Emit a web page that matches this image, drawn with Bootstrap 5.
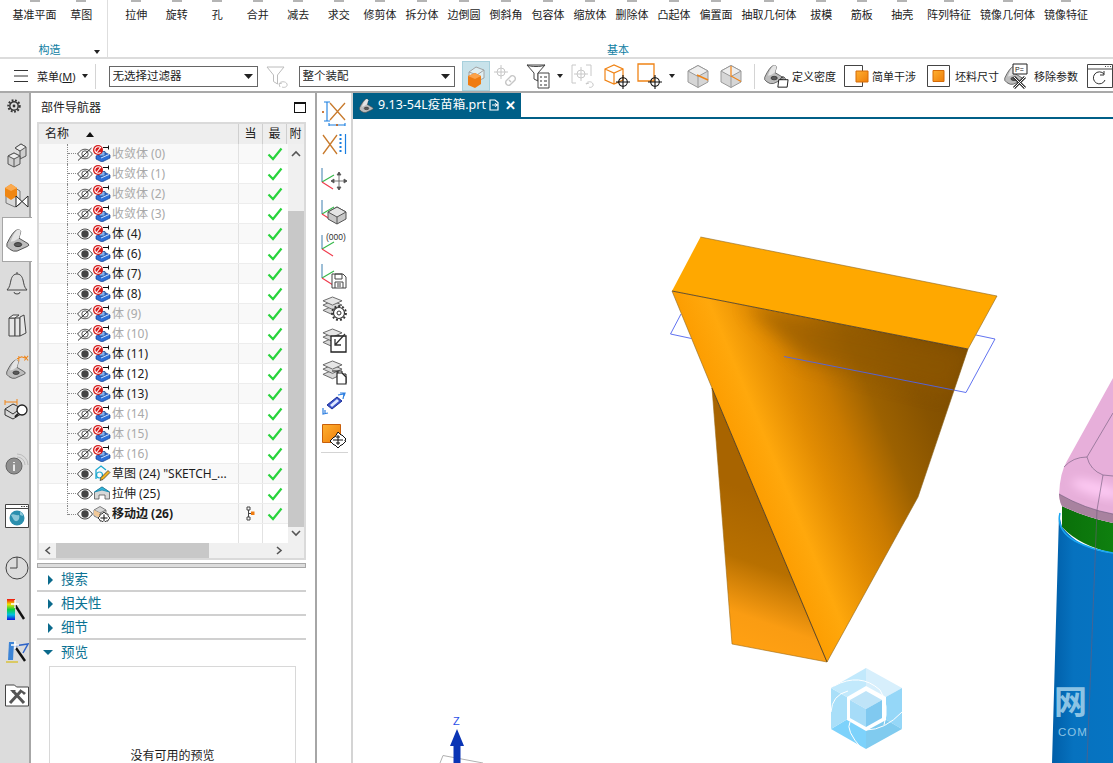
<!DOCTYPE html>
<html lang="zh-CN">
<head>
    <meta charset="UTF-8">
    <meta name="viewport" content="width=device-width, initial-scale=1.0">
    <title>NX 部件导航器</title>
    <link href="https://cdn.jsdelivr.net/npm/bootstrap@5.3.2/dist/css/bootstrap.min.css" rel="stylesheet">
    <style>
        body { font-family: "Noto Sans", "Noto Sans CJK SC", sans-serif; font-size: 11px; color: #1c1c1c; background: #fff; width: 1113px; height: 763px; }
        svg { display: block; flex-shrink: 0; }

        /* ribbon */
        .ribbon { height: 59px; border-bottom: 2px solid #dcdcdc; flex-shrink: 0; }
        .rb-group { flex-shrink: 0; border-right: 1px solid #dedede; height: 57px; position: relative; }
        .rb-left { width: 108px; }
        .rb-main { width: 1020px; border-right: 0; }
        .rb-items { height: 42px; padding-left: 8px; flex-wrap: nowrap; }
        .rb-item { padding: 0 4.5px; min-width: 40.5px; text-align: center; white-space: nowrap; line-height: 15px; flex-shrink: 0; }
        .rb-item::before { content: ""; display: block; width: 10px; height: 2px; margin: 0 auto 5px; background: #b4b4b4; }
        .rb-title { color: #0f7ea3; text-align: center; line-height: 15px; }
        .rb-left .rb-title { padding-right: 8px; }
        .rb-more { position: absolute; right: 7px; bottom: 3px; }
        .tri-d { width: 0; height: 0; border-left: 3.5px solid transparent; border-right: 3.5px solid transparent; border-top: 4px solid #222; flex-shrink: 0; }

        /* toolbar */
        .toolbar { height: 34px; padding-top: 2px; border-bottom: 2px solid #a9a9a9; flex-shrink: 0; white-space: nowrap; }
        .tb-sep { width: 1px; height: 25px; background: #d4d4d4; }
        .tb-select { width: 149px; height: 21px; padding: 0 14px 0 3px; font-size: 11.5px; border: 1px solid #666; border-radius: 0; color: #1c1c1c; background-position: right 4px center; background-size: 9px 5px; background-image: url("data:image/svg+xml,%3Csvg xmlns='http://www.w3.org/2000/svg' viewBox='0 0 9 5'%3E%3Cpath d='M0 0h9L4.5 5z' fill='%23222'/%3E%3C/svg%3E"); flex-shrink: 0; }
        .tb-wide { width: 156px; }
        .tb-on { width: 31px; height: 30px; background: #c8e2ea; border: 1px solid #a8d0dc; }
        .tb-label { font-size: 11px; line-height: 1; }
        .gl-2 { margin-left: 2px; } .gl-3 { margin-left: 3px; } .gl-4 { margin-left: 4px; } .gl-5 { margin-left: 5px; }
        .gl-6 { margin-left: 6px; } .gl-7 { margin-left: 7px; } .gl-8 { margin-left: 8px; } .gl-9 { margin-left: 9px; }
        .gl-11 { margin-left: 11px; } .gl-13 { margin-left: 13px; } .gl-14 { margin-left: 14px; }

        /* left rail */
        .rail { width: 31px; background: #dcdcdc; border-right: 2px solid #a6a6a6; flex-shrink: 0; }
        .rail-slot { height: 42px; width: 29px; margin-left: 2px; flex-shrink: 0; }
        .rail-gear { height: 26px; padding-right: 6px; }
        .rail-40 { height: 40px; }
        .rail-first { margin-top: 16px; }
        .rail-on { height: 45px; width: 30px; margin-top: 2px; background: #fff; border: 1px solid #a6a6a6; border-right: 0; margin-right: -2px; position: relative; z-index: 1; }
        .rail-g13 { margin-top: 13px; }
        .rail-g10 { margin-top: 10px; }

        /* navigator */
        .navi { width: 286px; border-right: 2px solid #a6a6a6; flex-shrink: 0; padding-left: 6px; }
        .navi-head { height: 29px; padding: 0 9px 0 4px; font-size: 12px; }
        .max-box { width: 12px; height: 11px; border: 1px solid #111; border-top-width: 2px; }
        .tree-box { width: 269px; height: 438px; border: 2px solid #dadada; border-bottom-width: 2px; }
        .tree-head { height: 20px; background: #eeeeee; font-size: 12px; line-height: 20px; }
        .c-name { width: 199px; flex-shrink: 0; }
        .c-cur { width: 24px; flex-shrink: 0; border-left: 1px solid #e2e2e2; }
        .c-new { width: 24px; flex-shrink: 0; border-left: 1px solid #e2e2e2; }
        .tree-head .c-name { padding-left: 6px; }
        .tree-head .c-cur, .tree-head .c-new, .tree-head .c-att { border-left: 1px solid #cfcfcf; text-align: center; height: 20px; }
        .c-att { flex-grow: 1; overflow: hidden; }
        .sort-up { width: 0; height: 0; border-left: 4.5px solid transparent; border-right: 4.5px solid transparent; border-bottom: 5px solid #111; margin-left: 17px; }
        .tree-row { height: 20px; font-size: 12px; border-bottom: 1px solid #ededed; white-space: nowrap; }
        .tree-row:nth-child(odd) { background: #f9f9f9; }
        .tree-empty { height: 19px; }
        .is-off { color: #a9a9a9; }
        .is-cur { font-weight: 700; }
        .tline { width: 10px; height: 20px; margin-left: 28px; border-left: 1px dotted #8a8a8a; position: relative; flex-shrink: 0; }
        .tline::after { content: ""; position: absolute; left: 0; top: 9px; width: 10px; border-top: 1px dotted #8a8a8a; }
        .tline-end { height: 10px; align-self: flex-start; }
        .tree-name { margin-left: 1px; }
        .vbar { width: 16px; background: #f0f0f0; position: relative; }
        .vthumb { position: absolute; left: 0; right: 0; top: 67px; height: 316px; background: #c8c8c8; }
        .vup { position: absolute; left: 3px; top: 6px; }
        .vdn { position: absolute; left: 3px; bottom: 6px; }
        .hbar { height: 15px; background: #f0f0f0; position: relative; }
        .hthumb { position: absolute; left: 17px; width: 153px; top: 0; bottom: 0; background: #c8c8c8; }
        .hl { position: absolute; left: 5px; top: 3px; }
        .hr { position: absolute; right: 21px; top: 3px; }
        .sash { width: 269px; height: 5px; margin-top: 3px; background: #dcdcdc; border: 1px solid #a8a8a8; }
        .sect { width: 269px; height: 24px; border-bottom: 2px solid #d0d0d0; color: #0b7293; font-size: 13.5px; padding-top: 1px; }
        .sect-last { border-bottom: 0; height: 23px; }
        .tri-r { width: 0; height: 0; border-top: 5px solid transparent; border-bottom: 5px solid transparent; border-left: 5px solid #0b6a8c; margin: 0 8px 0 11px; }
        .tri-o { width: 0; height: 0; border-left: 5px solid transparent; border-right: 5px solid transparent; border-bottom: 0; border-top: 5px solid #0b6a8c; margin: 0 8px 0 6px; }
        .preview { width: 247px; height: 110px; margin: 3px 0 0 12px; border: 1px solid #d8d8d8; padding-top: 80px; text-align: center; font-size: 12px; }

        /* vertical tools */
        .vtools { width: 36px; border-right: 2px solid #d4d4d4; flex-shrink: 0; padding-top: 4px; }
        .vt-slot { height: 32px; flex-shrink: 0; }
        .vt-gap { margin-top: 3px; }
        .vt-line { width: 27px; height: 1px; background: #d4d4d4; margin-top: 0; }

        /* graphics window */
        .view { min-width: 0; }
        .tabstrip { height: 26px; border-bottom: 2px solid #005f87; flex-shrink: 0; }
        .doc-tab { width: 168px; height: 24px; background: #005f87; color: #fff; font-size: 12.5px; padding-left: 5px; }
        .doc-x { font-size: 13px; font-weight: 700; line-height: 1; }
    </style>
</head>
<body class="d-flex flex-column overflow-hidden">
    <svg width="0" height="0" class="position-absolute">
        <defs>
            <linearGradient id="gOrange" x1="0" y1="0" x2="1" y2="1"><stop offset="0" stop-color="#ffb030"/><stop offset="1" stop-color="#ee7d0a"/></linearGradient>
            <linearGradient id="gRainbow" x1="0" y1="0" x2="0" y2="1"><stop offset="0" stop-color="#f01010"/><stop offset=".25" stop-color="#f0e000"/><stop offset=".5" stop-color="#10d040"/><stop offset=".75" stop-color="#00c0e0"/><stop offset="1" stop-color="#1010e0"/></linearGradient>
            <symbol id="eye" viewBox="0 0 16 12"><path d="M.5 6C3 2.400 5.400 1 8 1s5 1.400 7.500 5C13 9.600 10.600 11 8 11S3 9.600 .5 6z" fill="#fff" stroke="#444"/><circle cx="8" cy="6" r="3.700" fill="#444"/></symbol>
            <symbol id="eye-off" viewBox="0 0 16 14"><path d="M.7 7C3 3.600 5.400 2.200 8 2.200S13 3.600 15.300 7C13 10.400 10.600 11.800 8 11.800S3 10.400 .7 7z" fill="#fff" stroke="#555"/><circle cx="8" cy="7" r="3.200" fill="none" stroke="#555"/><path d="M1 13.500 14.500 1" stroke="#333" stroke-width="1"/></symbol>
            <symbol id="body-node" viewBox="0 0 18 17"><path d="M3 11l8-4 6 3v3l-8 4-6-3z" fill="#2f6fd6" stroke="#163f8c" stroke-width=".7"/><path d="M6 6.500h6v4.500H6z" fill="#7fb0ee" stroke="#163f8c" stroke-width=".7"/><path d="M8 13l8-3.500" stroke="#cfe3fa"/><circle cx="5" cy="5" r="5" fill="#d61a1a"/><path d="M7.600 2.800a3.300 3.300 0 1 0 0 4.400M3 8l5-6" fill="none" stroke="#fff" stroke-width="1.100"/><path d="M10 2.500h6M15.500 .5v4" stroke="#111" stroke-width="1"/></symbol>
            <symbol id="sketch-node" viewBox="0 0 18 17"><path d="M3 14V5l5-4 5 4" fill="none" stroke="#19a7cf" stroke-width="1.300"/><circle cx="6.500" cy="10" r="3" fill="none" stroke="#19a7cf" stroke-width="1.200"/><path d="M7 15.500l1-3 7-7 2 2-7 7z" fill="#f3b21f" stroke="#333" stroke-width=".7"/></symbol>
            <symbol id="extrude-node" viewBox="0 0 18 17"><path d="M1.500 7 9 2l7.500 5v7H12v-4H6v4H1.500z" fill="#d8d8d8" stroke="#555" stroke-width=".8"/><path d="M1.500 7 9 2l7.500 5L9 5z" fill="#35b7dc" stroke="#1787ad" stroke-width=".8"/></symbol>
            <symbol id="move-node" viewBox="0 0 18 17"><path d="M1 5l6-3.500L13 5v6l-6 3-6-3z" fill="#d6d6d6" stroke="#666" stroke-width=".8"/><path d="M1 5l6 3 6-3" fill="none" stroke="#666" stroke-width=".8"/><path d="M1 5l6 3v5l-6-3z" fill="#f2c998"/><path d="M11 7l2 2h2v2l2 2-2 2v1h-2l-2 2-2-2H7v-1l-2-2 2-2V9h2z" fill="#fff" stroke="#111" stroke-width=".8"/><path d="M11 9.500v7M7.500 13h7" stroke="#111" stroke-width="1"/></symbol>
            <symbol id="check" viewBox="0 0 16 14"><path d="M1.500 7.500 6 12 14.500 1.500" fill="none" stroke="#28d33c" stroke-width="2.200"/></symbol>
            <symbol id="chev-up" viewBox="0 0 10 7"><path d="M1 6l4-4 4 4" fill="none" stroke="#555" stroke-width="1.600"/></symbol>
            <symbol id="chev-dn" viewBox="0 0 10 7"><path d="M1 1l4 4 4-4" fill="none" stroke="#555" stroke-width="1.600"/></symbol>
            <symbol id="target" viewBox="0 0 14 14"><circle cx="7" cy="7" r="4.300" fill="none" stroke="#111" stroke-width="1.100"/><path d="M7 0v14M0 7h14" stroke="#111" stroke-width="1.100"/></symbol>
            <symbol id="axes" viewBox="0 0 26 28"><path d="M1 1v14" stroke="#3d7fae" stroke-width="1"/><path d="M1 15 13 8" stroke="#35b84a" stroke-width="1.100"/><path d="M1 15l11 7" stroke="#ef3a4c" stroke-width="1.100"/></symbol>
            <symbol id="layers" viewBox="0 0 22 24"><g fill="#d8d8d8" stroke="#666" stroke-width="1"><path d="M1 15l10-4.500L21 15l-10 4.500z"/><path d="M1 9.500l10-4.500 10 4.500-10 4.500z"/><path d="M1 5l10-4 10 4-10 4.500z" fill="#e6e6e6"/></g></symbol>
            <symbol id="part" viewBox="0 0 28 26"><path d="M2 17Q8 4 13 2q3-1 4 2l-2 7 10 6q2 2-1 3l-11 5q-4 1-8-2l-3-3z" fill="#bdbdbd" stroke="#4a4a4a"/><path d="M13 2q3-1 4 2l-2 7-5 3-4 1q3-9 7-13z" fill="#e4e4e4"/><ellipse cx="14" cy="18" rx="4" ry="2.200" fill="#5a5a5a" stroke="#333"/></symbol>
            <symbol id="cube-g" viewBox="0 0 24 24"><path d="M12 1.500 22 7v11l-10 5.500L2 18V7z" fill="#d6d6d6" stroke="#999"/><path d="M2 7l10 5.500L22 7 12 1.500z" fill="#eeeeee" stroke="#999"/><path d="M12 12.500v11" stroke="#999"/></symbol>
        </defs>
    </svg>

    <!-- Ribbon -->
    <div class="ribbon d-flex">
        <div class="rb-group rb-left d-flex flex-column">
            <div class="rb-items d-flex">
                <div class="rb-item">基准平面</div>
                <div class="rb-item">草图</div>
            </div>
            <div class="rb-title">构造</div>
            <span class="tri-d rb-more"></span>
        </div>
        <div class="rb-group rb-main d-flex flex-column">
            <div class="rb-items d-flex" id="ribbonItems"></div>
            <div class="rb-title">基本</div>
        </div>
    </div>

    <!-- Selection bar -->
    <div class="toolbar d-flex align-items-center">
        <svg class="gl-14" width="14" height="12" viewBox="0 0 14 12"><path d="M0 .5h14M0 6h14M0 11.500h14" stroke="#333"/></svg>
        <span class="gl-9 tb-label">菜单(<u>M</u>)</span>
        <span class="tri-d gl-6"></span>
        <span class="tb-sep gl-7"></span>
        <select class="form-select tb-select gl-13"><option>无选择过滤器</option></select>
        <svg class="gl-8" width="24" height="25" viewBox="0 0 24 25"><path d="M1 3h17l-6.500 8v9l-4-2.500V11z" fill="#fff" stroke="#bcbcbc"/><path d="M13 20c1-3 7-3 8 0s-3 4-5 3M13 20l3-1M13 20l1 3" fill="none" stroke="#c4c4c4"/></svg>
        <select class="form-select tb-select tb-wide gl-9"><option>整个装配</option></select>
        <div class="tb-on gl-7 d-flex align-items-center justify-content-center">
            <svg width="20" height="25" viewBox="0 0 20 25"><path d="M3 8l7-5 8 3v8l-8 4-7-3z" fill="#dfeef2" stroke="#a2a2a2"/><path d="M3 8l8 3 7-5M11 11v7" fill="none" stroke="#a2a2a2"/><path d="M2 12l7-3 6 3v8l-6 4-7-3z" fill="#ef7c12"/><path d="M2 12l7 3 6-3-6-3z" fill="#fba24a"/></svg>
        </div>
        <svg class="gl-3" width="24" height="24" viewBox="0 0 24 24"><g fill="none" stroke="#c6c6c6"><circle cx="8" cy="8" r="4"/><path d="M8 1v14M1 8h14"/><path d="M13 17l5-5a3 3 0 0 1 4 4l-5 5a3 3 0 0 1-4-4zM16 16l2 2" stroke-width="1.400"/></g></svg>
        <svg class="gl-9" width="24" height="26" viewBox="0 0 24 26"><path d="M1 2h18l-7 8v8l-4-2v-6z" fill="#fff" stroke="#444"/><path d="M1 2c3 2 15 2 18 0" fill="none" stroke="#444"/><path d="M12 10h11v15H12z" fill="#fff" stroke="#444"/><path d="M14 14h2M14 18h2M14 22h2M18 14h3M18 18h3M18 22h3" stroke="#333"/></svg>
        <span class="tri-d gl-7"></span>
        <svg class="gl-8" width="24" height="25" viewBox="0 0 24 25"><g fill="none" stroke="#c8c8c8"><path d="M5 1H1v18h4M15 1h5v11"/><circle cx="10" cy="10" r="4"/><path d="M10 3v14M3 10h14"/><path d="M15 20c1-3 6-3 7 0s-3 4-4 3M15 20l3-1"/></g></svg>
        <svg class="gl-9" width="26" height="26" viewBox="0 0 26 26"><path d="M1 6l9-4 9 4v11l-9 4-9-4zM1 6l9 4 9-4M10 10v11" fill="#fff" stroke="#f08416" stroke-width="1.200"/><use href="#target" x="12" y="12" width="14" height="14"/></svg>
        <svg class="gl-7" width="25" height="26" viewBox="0 0 25 26"><path d="M1 1h16v17H1z" fill="#fff" stroke="#f08416" stroke-width="1.300"/><use href="#target" x="11" y="12" width="14" height="14"/></svg>
        <span class="tri-d gl-7"></span>
        <svg class="gl-11" width="24" height="24" viewBox="0 0 24 24"><use href="#cube-g" width="24" height="24"/><path d="M11 11l11 5" stroke="#f08416" stroke-width="1.400"/></svg>
        <svg class="gl-9" width="24" height="24" viewBox="0 0 24 24"><use href="#cube-g" width="24" height="24"/><path d="M12 2v10l10 5.500" fill="none" stroke="#f08416" stroke-width="1.200"/></svg>
        <span class="tb-sep gl-11"></span>
        <svg class="gl-8" width="26" height="26" viewBox="0 0 28 26"><use href="#part" width="24" height="22"/><path d="M17 17h10l-1 8H16z" fill="#fff" stroke="#111"/><path d="M19 17c0-4 5-4 5 0" fill="none" stroke="#111"/></svg>
        <span class="gl-3 tb-label">定义密度</span>
        <svg class="gl-8" width="26" height="22" viewBox="0 0 26 22"><path d="M.5.5h18v21H.5z" fill="none" stroke="#444"/><path d="M12 6h12v11H12z" fill="url(#gOrange)" stroke="#d46a08"/></svg>
        <span class="gl-2 tb-label">简单干涉</span>
        <svg class="gl-11" width="23" height="22" viewBox="0 0 23 22"><path d="M.5.5h22v21H.5z" fill="none" stroke="#444"/><path d="M6 5.500h11v11H6z" fill="url(#gOrange)" stroke="#d46a08"/></svg>
        <span class="gl-5 tb-label">坯料尺寸</span>
        <svg class="gl-4" width="25" height="26" viewBox="0 0 25 26"><use href="#part" y="2" width="22" height="20"/><path d="M10 1h14v10H10z" fill="#fff" stroke="#222"/><text x="12" y="8.500" font-size="7" font-family="Liberation Sans, sans-serif" fill="#222">P=</text><path d="M11 14l11 11M22 14 11 25" stroke="#333" stroke-width="3"/><path d="M11 14l11 11M22 14 11 25" stroke="#fff" stroke-width="1"/></svg>
        <span class="gl-6 tb-label">移除参数</span>
        <svg class="gl-9" width="26" height="24" viewBox="0 0 26 24"><path d="M.5.5h25v23H.5zM.5 5h25" fill="none" stroke="#444"/><path d="M18 2.500h1M20.500 2.500h1M23 2.500h1" stroke="#444"/><path d="M17 10a6 6 0 1 0 1 6M17 7v4h-4" fill="none" stroke="#333"/></svg>
    </div>

    <div class="d-flex flex-grow-1 overflow-hidden">
        <!-- Resource bar tabs -->
        <div class="rail d-flex flex-column">
            <div class="rail-slot rail-gear d-flex align-items-center justify-content-center"><svg width="14" height="14" viewBox="0 0 14 14"><circle cx="7" cy="7" r="4.200" fill="none" stroke="#333" stroke-width="1.400"/><circle cx="7" cy="7" r="5.700" fill="none" stroke="#333" stroke-width="2" stroke-dasharray="1.800 1.600"/><circle cx="7" cy="7" r="1.400" fill="#333"/></svg></div>
            <div class="rail-slot rail-40 rail-first d-flex align-items-center justify-content-center"><svg width="20" height="26" viewBox="0 0 20 26"><g fill="#cfcfcf" stroke="#555"><path d="M8 6l6-4 5 3v9l-6 3V9z"/><path d="M8 6l5 3 6-4-5-3z" fill="#ececec"/><path d="M1 14l6-3 6 3v8l-6 3-6-3z"/><path d="M1 14l6 3 6-3-6-3z" fill="#ececec"/><path d="M7 17v8"/></g></svg></div>
            <div class="rail-slot rail-40 d-flex align-items-center justify-content-center"><svg width="26" height="25" viewBox="0 0 26 25"><path d="M2 9l9-4 5 3v13l-5 3-9-4z" fill="#d9d9d9" stroke="#777"/><path d="M1 5l6-4 6 4v8l-6 4-6-4z" fill="#ef8612"/><path d="M1 5l6 3 6-3-6-4z" fill="#fbaa50"/><path d="M12 13l12 11V13L12 24z" fill="#fff" stroke="#222"/></svg></div>
            <div class="rail-slot rail-on d-flex align-items-center justify-content-center"><svg width="26" height="24" viewBox="0 0 28 26"><use href="#part" width="28" height="26"/></svg></div>
            <div class="rail-slot d-flex align-items-center justify-content-center"><svg width="22" height="24" viewBox="0 0 22 24"><path d="M1 19c3-3 3-6 4-10 1-4 3-6 6-6s5 2 6 6c1 4 1 7 4 10z" fill="none" stroke="#444"/><path d="M8 21a3 2 0 0 0 6 0M11 3V1" fill="none" stroke="#444"/></svg></div>
            <div class="rail-slot d-flex align-items-center justify-content-center"><svg width="20" height="24" viewBox="0 0 20 24"><g fill="#e6e6e6" stroke="#444"><path d="M2 5h6v18H2z"/><path d="M2 5l4-3h6l-4 3z" fill="#f4f4f4"/><path d="M8 5h5v18H8z"/><path d="M13 4l4-2 2 18-6 3z"/></g></svg></div>
            <div class="rail-slot d-flex align-items-center justify-content-center"><svg width="24" height="26" viewBox="0 0 26 26"><use href="#part" y="4" width="24" height="22"/><path d="M13 4l5-2 6 2M15 1v6M21 1l4 5M25 1l-4 5" fill="none" stroke="#f08416" stroke-width="1.100"/></svg></div>
            <div class="rail-slot d-flex align-items-center justify-content-center"><svg width="25" height="24" viewBox="0 0 25 24"><path d="M1 12 9 7l8 4v6l-8 5-8-4z" fill="#d8d8d8" stroke="#333"/><path d="M1 12l8 5 8-6" fill="none" stroke="#333"/><path d="M1 8V3M1 5l12 0M13 2v6" stroke="#f08416" fill="none"/><circle cx="18" cy="13" r="5" fill="#fff" stroke="#222" stroke-width="1.300"/><path d="M14 17l-3 3" stroke="#222" stroke-width="2"/></svg></div>
            <div class="rail-slot rail-g13 d-flex align-items-center justify-content-center"><svg width="24" height="24" viewBox="0 0 24 24"><circle cx="9" cy="14" r="8" fill="#909090" stroke="#666"/><path d="M9 10v1M9 12.500V19" stroke="#fff" stroke-width="1.600"/><path d="M12 2a11 11 0 0 1 11 11M12 5a8 8 0 0 1 8 8" fill="none" stroke="#bbb"/></svg></div>
            <div class="rail-slot rail-g10 d-flex align-items-center justify-content-center"><svg width="24" height="24" viewBox="0 0 24 24"><path d="M.5.500h23v23H.5zM.5 4.500h23" fill="#fff" stroke="#444"/><path d="M16 2.500h1.500M18.500 2.500H20M21 2.500h1.500" stroke="#444"/><circle cx="12" cy="14" r="7.500" fill="#2b8fae"/><path d="M6 11c3-2 5 1 7 0s2 5-1 6-4-3-6-6zM15 8c2 0 3 2 3 4l-3-1z" fill="#8cc7d8"/></svg></div>
            <div class="rail-slot rail-g10 d-flex align-items-center justify-content-center"><svg width="24" height="24" viewBox="0 0 24 24"><circle cx="12" cy="12" r="11" fill="none" stroke="#444"/><path d="M12 1v11H5" fill="none" stroke="#444"/></svg></div>
            <div class="rail-slot d-flex align-items-center justify-content-center"><svg width="22" height="24" viewBox="0 0 22 24"><rect x="1" y="1" width="8" height="21" fill="url(#gRainbow)"/><path d="M9 7l9 14" stroke="#111" stroke-width="2.400"/><path d="M9 2v8M5 6h8" stroke="#fff" stroke-width="1.400"/></svg></div>
            <div class="rail-slot d-flex align-items-center justify-content-center"><svg width="24" height="24" viewBox="0 0 24 24"><path d="M4 2h5l-1 18H3z" fill="#3c84d6"/><path d="M9 6l14-2-5 9" fill="none" stroke="#2f64c8" stroke-width="1.500"/><path d="M11 8l9 13" stroke="#111" stroke-width="2.400"/><path d="M10 1v8M6 5h8" stroke="#fff" stroke-width="1.400"/><path d="M1 22h12" stroke="#d8c030" stroke-width="1.400"/></svg></div>
            <div class="rail-slot d-flex align-items-center justify-content-center"><svg width="24" height="25" viewBox="0 0 24 25"><path d="M.5 24V3h9l2 2h12v19z" fill="#fff" stroke="#444"/><path d="M5 21 16 9M19 21 8 9" stroke="#555" stroke-width="3"/><path d="M5 8h6l-3 3zM15 7l6 4-2 2-4-4z" fill="#555"/></svg></div>
        </div>

        <!-- Part navigator -->
        <div class="navi d-flex flex-column">
            <div class="navi-head d-flex align-items-center justify-content-between flex-shrink-0">
                <span>部件导航器</span>
                <span class="max-box"></span>
            </div>
            <div class="tree-box d-flex flex-column flex-shrink-0">
                <div class="tree-head d-flex flex-shrink-0">
                    <div class="c-name d-flex align-items-center">名称<span class="sort-up"></span></div>
                    <div class="c-cur">当</div>
                    <div class="c-new">最</div>
                    <div class="c-att">附</div>
                </div>
                <div class="d-flex flex-grow-1">
                    <div class="flex-grow-1" id="treeRows"></div>
                    <div class="vbar">
                        <div class="vthumb"></div>
                        <svg class="vup" width="10" height="7"><use href="#chev-up"/></svg>
                        <svg class="vdn" width="10" height="7"><use href="#chev-dn"/></svg>
                    </div>
                </div>
                <div class="hbar flex-shrink-0">
                    <div class="hthumb"></div>
                    <svg class="hl" width="7" height="9" viewBox="0 0 7 9"><path d="M6 1 2 4.500 6 8" fill="none" stroke="#555" stroke-width="1.600"/></svg>
                    <svg class="hr" width="7" height="9" viewBox="0 0 7 9"><path d="M1 1l4 3.500L1 8" fill="none" stroke="#555" stroke-width="1.600"/></svg>
                </div>
            </div>
            <div class="sash flex-shrink-0"></div>
            <div class="sect d-flex align-items-center flex-shrink-0"><span class="tri-r"></span>搜索</div>
            <div class="sect d-flex align-items-center flex-shrink-0"><span class="tri-r"></span>相关性</div>
            <div class="sect d-flex align-items-center flex-shrink-0"><span class="tri-r"></span>细节</div>
            <div class="sect sect-last d-flex align-items-center flex-shrink-0"><span class="tri-o"></span>预览</div>
            <div class="preview flex-shrink-0">没有可用的预览</div>
        </div>

        <!-- Vertical tools -->
        <div class="vtools d-flex flex-column align-items-center">
            <div class="vt-slot d-flex align-items-center"><svg width="26" height="26" viewBox="0 0 26 26"><path d="M9 3 24 20M24 3 9 20" stroke="#c87a2c" stroke-width="1.300"/><path d="M3 2h6M6 2v19M3 21h6M8 25h16M8 23v4M24 23v4" stroke="#1a7fe0" fill="none" stroke-width="1.100"/><path d="M1 11l2 2M3 11l-2 2M15 24l2 2M17 24l-2 2" stroke="#c05a10" stroke-width=".8"/></svg></div>
            <div class="vt-slot d-flex align-items-center"><svg width="25" height="22" viewBox="0 0 25 22"><path d="M1 1l14 19M15 1 1 20" stroke="#c87a2c" stroke-width="1.300"/><path d="M23.500 0v20" stroke="#1a7fe0" stroke-width="1.200"/><path d="M18.500 0v20" stroke="#1a7fe0" stroke-width="2" stroke-dasharray="2 2"/></svg></div>
            <div class="vt-slot vt-gap d-flex align-items-center"><svg width="26" height="26" viewBox="0 0 26 26"><use href="#axes" width="26" height="28"/><path d="M18 5v18M10 14h16M18 5l-2 3h4zM18 23l-2-3h4zM10 14l3-2v4zM26 14l-3-2v4z" fill="#555" stroke="#555" stroke-width=".8"/></svg></div>
            <div class="vt-slot d-flex align-items-center"><svg width="26" height="26" viewBox="0 0 26 26"><use href="#axes" width="26" height="28"/><path d="M7 13l9-5 9 5v7l-9 5-9-5z" fill="#c8c8c8" stroke="#555"/><path d="M7 13l9 5 9-5-9-5z" fill="#e4e4e4" stroke="#555"/><path d="M16 18v7" stroke="#555"/></svg></div>
            <div class="vt-slot d-flex align-items-center"><svg width="26" height="26" viewBox="0 0 26 26"><use href="#axes" y="3" width="26" height="28"/><text x="5" y="9" font-size="8.500" font-family="Liberation Sans, sans-serif" fill="#333">(000)</text></svg></div>
            <div class="vt-slot d-flex align-items-center"><svg width="26" height="26" viewBox="0 0 26 26"><use href="#axes" width="26" height="28"/><path d="M11 11h11l3 3v11H11z" fill="#fff" stroke="#444"/><path d="M14 11h7v5h-7zM14 25v-6h8v6M16 21h4M16 23h4" fill="none" stroke="#444"/></svg></div>
            <div class="vt-slot d-flex align-items-center"><svg width="25" height="25" viewBox="0 0 25 25"><use href="#layers" width="21" height="23"/><circle cx="17" cy="17" r="5.500" fill="#fff" stroke="#333" stroke-width="1.200"/><circle cx="17" cy="17" r="7" fill="none" stroke="#333" stroke-width="1.800" stroke-dasharray="2 2"/><circle cx="17" cy="17" r="2" fill="#fff" stroke="#333"/></svg></div>
            <div class="vt-slot d-flex align-items-center"><svg width="25" height="25" viewBox="0 0 25 25"><use href="#layers" width="21" height="23"/><path d="M9 8h15v16H9z" fill="#fff" stroke="#222" stroke-width="1.300"/><path d="M23 6 13 17M13 11v6h6" fill="none" stroke="#333" stroke-width="1.300"/></svg></div>
            <div class="vt-slot d-flex align-items-center"><svg width="25" height="25" viewBox="0 0 25 25"><use href="#layers" width="21" height="23"/><path d="M10 11h6v12h8V14h-4v-3h-4" fill="#fff" stroke="#222"/><path d="M15 13h5l4 4v7h-9z" fill="#fff" stroke="#222" stroke-width="1.200"/></svg></div>
            <div class="vt-slot d-flex align-items-center"><svg width="24" height="24" viewBox="0 0 24 24"><path d="M5 13 15 5l5 4-10 8z" fill="#3c54c8" stroke="#1b2f9a"/><path d="M8 13l7-6 2 2-7 6z" fill="#dfe8ff"/><path d="M16 3l6-1-1 5M18 1l5 0-1 3M1 16l0 6 5-1M3 18v3" fill="none" stroke="#2e7fe0" stroke-width="1.200"/></svg></div>
            <div class="vt-slot d-flex align-items-center"><svg width="25" height="25" viewBox="0 0 25 25"><path d="M.5.500h18v18H.5z" fill="url(#gOrange)" stroke="#c85f0a"/><path d="M16 8l3 3h1l0 0 4 4-1 1v1l1 0-4 4-1 0-3 3-3-3-1 0-4-4 4-4 1 0z" fill="#fff" stroke="#111"/><path d="M16 11v10M11 16h10M14 13h4M14 19h4" stroke="#111"/></svg></div>
            <div class="vt-line"></div>
        </div>

        <!-- Graphics window -->
        <div class="view flex-grow-1 d-flex flex-column">
            <div class="tabstrip">
                <div class="doc-tab d-flex align-items-center">
                    <svg width="17" height="15" viewBox="0 0 28 26"><use href="#part" width="28" height="26"/></svg>
                    <span class="gl-3">9.13-54L疫苗箱.prt</span>
                    <svg class="gl-3" width="10" height="12" viewBox="0 0 10 12"><path d="M1 1h5l3 2.500V11H1zM3 6h3M6 4.500 8 6 6 7.500" fill="none" stroke="#fff" stroke-width="1.200"/></svg>
                    <span class="doc-x gl-6">✕</span>
                </div>
            </div>
            <svg class="flex-grow-1" width="760" height="644" viewBox="353 119 760 644">
                <defs>
                    <clipPath id="frontClip"><polygon points="672,291 968,349 918,497 827,662 712,388"/></clipPath>
                    <clipPath id="pinkClip"><path d="M1113 378 1067 461Q1060 472 1059 495 1060 503 1062 506 1085 517 1113 523Z"/></clipPath>
                    <filter id="soft2" x="-40%" y="-40%" width="180%" height="180%"><feGaussianBlur stdDeviation="5"/></filter>
                    <filter id="soft3" x="-40%" y="-40%" width="180%" height="180%"><feGaussianBlur stdDeviation="9"/></filter>
                    <linearGradient id="frontFace" gradientUnits="userSpaceOnUse" x1="720" y1="420" x2="950" y2="325">
                        <stop offset="0" stop-color="#fc9c00"/><stop offset=".14" stop-color="#ffa80c"/><stop offset=".3" stop-color="#e28c02"/><stop offset=".44" stop-color="#c97a00"/><stop offset=".6" stop-color="#9c6100"/><stop offset=".78" stop-color="#875300"/><stop offset="1" stop-color="#7a4a00"/>
                    </linearGradient>
                    <linearGradient id="lowFace" gradientUnits="userSpaceOnUse" x1="775" y1="500" x2="725" y2="640"><stop offset="0" stop-color="#a86400"/><stop offset=".45" stop-color="#b87000"/><stop offset=".8" stop-color="#fa9c12"/><stop offset="1" stop-color="#ffa012"/></linearGradient>
                    <linearGradient id="blueBody" x1="0" y1="0" x2="1" y2="0"><stop offset="0" stop-color="#005ea8"/><stop offset=".35" stop-color="#0672bf"/><stop offset="1" stop-color="#0674c2"/></linearGradient>
                    <linearGradient id="greenBand" x1="0" y1="0" x2="1" y2="0"><stop offset="0" stop-color="#0a700a"/><stop offset="1" stop-color="#0f800f"/></linearGradient>
                </defs>

                <!-- wireframe plane -->
                <path d="M691.500 338.500 670.500 334 681 314M976 335 995 339 966 392.500 953.500 390" fill="none" stroke="#4f63ee" stroke-width=".9"/>

                <!-- wedge solid -->
                <polygon points="712,388 827,662 732,644" fill="url(#lowFace)" stroke="#a06a10" stroke-width=".6"/>
                <polygon points="672,291 968,349 918,497 827,662 712,388" fill="url(#frontFace)"/>
                <g clip-path="url(#frontClip)">
                    <polygon points="745,305 975,350 950,395 805,360" fill="#905800" opacity=".65" filter="url(#soft3)"/>
                </g>
                <polygon points="672,291 700.500,237 997,296 968,349" fill="#ffa800"/>
                <path d="M672 291 968 349M712 388 827 662" stroke="#3d3428" stroke-width=".8" fill="none"/>
                <path d="M968 349 918 497 827 662M672 291 712 388M700.500 237 997 296 968 349" stroke="#8c6420" stroke-width=".6" fill="none"/>
                <path d="M784 356.500 953.500 390" stroke="#4f63ee" stroke-width=".9"/>

                <!-- bottle -->
                <path d="M1059 515 1052 763H1113V553Q1080 550 1062 527Z" fill="url(#blueBody)"/>
                <path d="M1062 506 1062 527Q1080 546 1113 553V523Q1085 517 1062 506Z" fill="url(#greenBand)"/>
                <path d="M1060 513Q1056 530 1075 541 1092 550 1113 553" fill="none" stroke="#19a6f2" stroke-width="1.500"/>
                <path d="M1113 378 1067 461Q1060 472 1059 495 1060 503 1062 506 1085 517 1113 523Z" fill="#e7afda"/>
                <g clip-path="url(#pinkClip)">
                    <ellipse cx="1097" cy="489" rx="26" ry="7" transform="rotate(16 1097 489)" fill="#fdc9f3" filter="url(#soft2)"/>
                    <path d="M1059 494Q1085 509 1113 514V530H1055Z" fill="#a8829f"/>
                </g>
                <path d="M1059 494Q1085 509 1113 514M1113 413 1087 457Q1073 457 1064 467M1087 457Q1090 470 1103 475L1113 476M1103 475 1097 510 1087 763" fill="none" stroke="#6d5a78" stroke-width=".6"/>

                <!-- watermark -->
                <polygon points="866,708 866,668 902,688" fill="#d7effc"/>
                <polygon points="866,708 902,688 902,729" fill="#95d7f8"/>
                <polygon points="866,708 902,729 866,749" fill="#80cbef"/>
                <polygon points="866,708 866,749 831,729" fill="#7dd2fb"/>
                <polygon points="866,708 831,729 831,688" fill="#a9dff9"/>
                <polygon points="866,708 831,688 866,668" fill="#c2e9fc"/>
                <path d="M834 686Q860 672 880 690 890 705 884 725M902 712Q885 730 866 730M862 749Q845 730 850 722M831 712Q832 695 848 691" fill="none" stroke="#fff" stroke-width="1"/>
                <polygon points="866,686 886,697 886,720 866,731 847,720 847,697" fill="#fff"/>
                <polygon points="866,691 882,700 866,709 850,700" fill="#bfe4f8"/>
                <polygon points="850,700 866,709 866,727 850,718" fill="#a6dcf8"/>
                <polygon points="882,700 866,709 866,727 882,718" fill="#80c9f0"/>
                <text x="1054" y="714" font-size="33" font-weight="700" font-family="Noto Sans CJK SC, sans-serif" fill="#8cc3e4">网</text>
                <text x="1058" y="736" font-size="11.500" font-family="Liberation Sans, sans-serif" letter-spacing="1" fill="#8cc3e4">COM</text>

                <!-- triad -->
                <path d="M440 763 443 755.500 483 763" fill="none" stroke="#b0b0b0"/>
                <text x="453" y="725" font-size="11" font-family="Liberation Sans, sans-serif" fill="#2a50e8">Z</text>
                <path d="M457 729 464 746H460.500V763H453.500V746H450Z" fill="#0a35b5"/>
            </svg>
        </div>
    </div>

    <script>
        // ribbon commands of the "基本" group
        const cmds = ["拉伸","旋转","孔","合并","减去","求交","修剪体","拆分体","边倒圆","倒斜角","包容体","缩放体","删除体","凸起体","偏置面","抽取几何体","拔模","筋板","抽壳","阵列特征","镜像几何体","镜像特征"];
        document.getElementById("ribbonItems").innerHTML = cmds.map(c => `<div class="rb-item">${c}</div>`).join("");

        // part navigator rows: [label, hidden, kind]
        const rows = [];
        for (let i = 0; i < 4; i++) rows.push([`收敛体 (${i})`, true, "body-node"]);
        [[4,0],[6,0],[7,0],[8,0],[9,1],[10,1],[11,0],[12,0],[13,0],[14,1],[15,1],[16,1]].forEach(r => rows.push([`体 (${r[0]})`, !!r[1], "body-node"]));
        rows.push(['草图 (24) "SKETCH_...', false, "sketch-node"]);
        rows.push(["拉伸 (25)", false, "extrude-node"]);
        rows.push(["移动边 (26)", false, "move-node", true]);

        document.getElementById("treeRows").innerHTML = rows.map((r, i) => `
            <div class="tree-row d-flex align-items-center">
                <div class="c-name d-flex align-items-center ${r[1] ? "is-off" : ""} ${r[3] ? "is-cur" : ""}">
                    <span class="tline ${i == rows.length - 1 ? "tline-end" : ""}"></span>
                    ${r[1] ? '<svg width="16" height="14"><use href="#eye-off"/></svg>' : '<svg width="16" height="12"><use href="#eye"/></svg>'}
                    <svg width="18" height="17"><use href="#${r[2]}"/></svg>
                    <span class="tree-name">${r[0]}</span>
                </div>
                <div class="c-cur h-100 d-flex align-items-center justify-content-center">
                    ${r[3] ? '<svg width="9" height="15" viewBox="0 0 9 15"><path d="M1 1h3v3H1zM1 11h3v3H1zM2.500 4v7M2.500 7.500H5" fill="none" stroke="#444"/><path d="M5 5.500h3.500V9H5z" fill="#ef7c12"/></svg>' : ""}
                </div>
                <div class="c-new h-100 d-flex align-items-center justify-content-center"><svg width="16" height="14"><use href="#check"/></svg></div>
            </div>`).join("") + `
            <div class="tree-empty d-flex"><div class="c-name"></div><div class="c-cur"></div><div class="c-new"></div></div>`;
    </script>
    <script src="https://cdn.jsdelivr.net/npm/bootstrap@5.3.2/dist/js/bootstrap.bundle.min.js"></script>
</body>
</html>
